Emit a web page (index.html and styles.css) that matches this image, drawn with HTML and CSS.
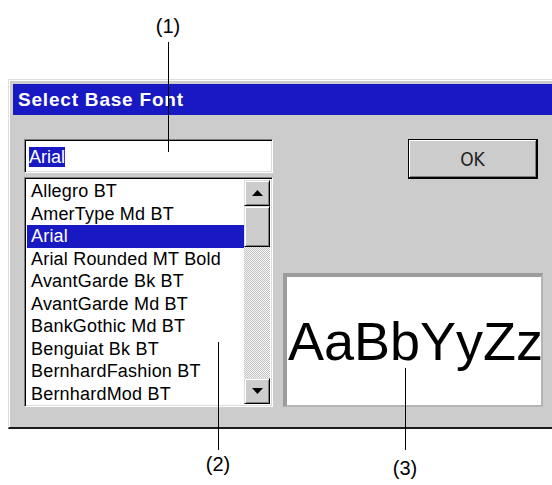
FILE: index.html
```html
<html>
<head>
  <title>Select Base Font</title>
  <link rel="stylesheet" href="styles.css">
</head>
<body>
  <div class="page">
    <div class="dialog">
      <div class="title-bar">Select Base Font</div>
      <div class="content">
        <div class="left-col">
          <div class="font-field"><span class="sel-text">Arial</span></div>
          <div class="listbox">
            <ul class="font-list">
              <li>Allegro BT</li>
              <li>AmerType Md BT</li>
              <li class="selected">Arial</li>
              <li>Arial Rounded MT Bold</li>
              <li>AvantGarde Bk BT</li>
              <li>AvantGarde Md BT</li>
              <li>BankGothic Md BT</li>
              <li>Benguiat Bk BT</li>
              <li>BernhardFashion BT</li>
              <li>BernhardMod BT</li>
            </ul>
            <div class="scrollbar">
              <div class="scroll-btn">
                <svg width="11" height="6" viewBox="0 0 11 6"><polygon points="5.5,0 11,6 0,6" fill="#000"/></svg>
              </div>
              <div class="scroll-thumb"></div>
              <div class="scroll-track"></div>
              <div class="scroll-btn">
                <svg width="11" height="6" viewBox="0 0 11 6"><polygon points="0,0 11,0 5.5,6" fill="#000"/></svg>
              </div>
            </div>
          </div>
        </div>
        <div class="right-col">
          <div class="ok-btn">OK</div>
          <div class="preview">AaBbYyZz</div>
        </div>
      </div>
    </div>

    <!-- callouts -->
    <div class="callout-label label-1">(1)</div>
    <div class="leader leader-1"></div>
    <div class="leader leader-2"></div>
    <div class="callout-label label-2">(2)</div>
    <div class="leader leader-3"></div>
    <div class="callout-label label-3">(3)</div>
  </div>
</body>
</html>
```

FILE: styles.css
```css
body {
  margin: 0;
  background: #fff;
  font-family: "Liberation Sans", Arial, sans-serif;
  color: #000;
}

.page {
  position: relative;
  width: 552px;
  height: 485px;
  overflow: hidden;
}

.dialog {
  margin: 79px 0 0 8px;
  width: 600px;
  background: #cccccc;
  border-top: 1px solid #dedede;
  border-left: 1px solid #dedede;
  border-bottom: 2px solid #1a1a1a;
  padding: 4px 0 0 4px;
  box-shadow: inset 1px 1px #fff;
}

.title-bar {
  height: 31px;
  background: #1919c3;
  color: #fff;
  font-weight: bold;
  font-size: 19px;
  letter-spacing: 0.8px;
  display: flex;
  align-items: center;
  padding-left: 5px;
}

.content {
  display: grid;
  grid-template-columns: 249px 260px;
  column-gap: 10px;
  padding: 24px 0 20px 11px;
}

.left-col {
  display: flex;
  flex-direction: column;
  gap: 4px;
}

.font-field {
  height: 34px;
  box-sizing: border-box;
  background: #fff;
  border: 1px solid;
  border-color: #808080 #fff #fff #808080;
  box-shadow: inset 1px 1px #000, inset -1px -1px #dcdcdc;
  padding: 7px 0 0 4px;
  font-size: 18px;
  line-height: 20px;
}

.sel-text {
  background: #1919c3;
  color: #fff;
}

.listbox {
  height: 230px;
  box-sizing: border-box;
  background: #fff;
  border: 1px solid;
  border-color: #808080 #fff #fff #808080;
  box-shadow: inset 1px 1px #000, inset -1px -1px #dcdcdc;
  padding: 2px 2px 2px 2px;
  display: flex;
}

.font-list {
  list-style: none;
  margin: 0;
  padding: 0;
  flex: 1;
  font-size: 18px;
  letter-spacing: 0.2px;
  line-height: 22.5px;
  overflow: hidden;
}

.font-list li {
  padding-left: 4px;
  white-space: nowrap;
}

.font-list li.selected {
  background: #1919c3;
  color: #fff;
}

.scrollbar {
  width: 26px;
  display: flex;
  flex-direction: column;
  margin-right: 0;
}

.scroll-btn,
.scroll-thumb {
  box-sizing: border-box;
  background: #cccccc;
  border: 1px solid;
  border-color: #dcdcdc #000 #000 #dcdcdc;
  box-shadow: inset 1px 1px #fff, inset -1px -1px #808080;
}

.scroll-btn {
  height: 26px;
  display: flex;
  align-items: center;
  justify-content: center;
}

.scroll-thumb {
  height: 41px;
}

.scroll-track {
  flex: 1;
  background: conic-gradient(#c4c4c4 25%, #f4f4f4 0 50%, #c4c4c4 0 75%, #f4f4f4 0) 0 0 / 2px 2px;
}

.right-col {
  display: flex;
  flex-direction: column;
}

.ok-btn {
  align-self: flex-start;
  margin-left: 125px;
  width: 130px;
  height: 40px;
  box-sizing: border-box;
  background: #cccccc;
  border: 1px solid #000;
  border-right-width: 2px;
  border-bottom-width: 2px;
  box-shadow: inset 1px 1px #fff, inset -1px -1px #808080;
  display: flex;
  align-items: center;
  justify-content: center;
  font-family: "Liberation Sans Narrow", "DejaVu Sans Condensed", sans-serif;
  font-size: 19px;
  color: #222;
}

.preview {
  margin-top: auto;
  height: 134px;
  box-sizing: border-box;
  background: #fff;
  border-top: 4px solid #9c9c9c;
  border-left: 4px solid #9c9c9c;
  border-right: 2px solid #b4b4b4;
  border-bottom: 2px solid #b4b4b4;
  padding: 37px 0 0 1px;
  font-size: 54px;
  line-height: 54px;
  white-space: nowrap;
  overflow: hidden;
}

.callout-label {
  position: absolute;
  width: 40px;
  margin-left: -20px;
  text-align: center;
  font-size: 20px;
  line-height: 22px;
}

.label-1 { left: 168px; top: 15px; }
.label-2 { left: 218px; top: 453px; }
.label-3 { left: 405px; top: 457px; }

.leader {
  position: absolute;
  width: 1px;
  background: #000;
}

.leader-1 { left: 168px; top: 42px; height: 110px; }
.leader-2 { left: 218px; top: 342px; height: 108px; }
.leader-3 { left: 405px; top: 368px; height: 82px; }
```
